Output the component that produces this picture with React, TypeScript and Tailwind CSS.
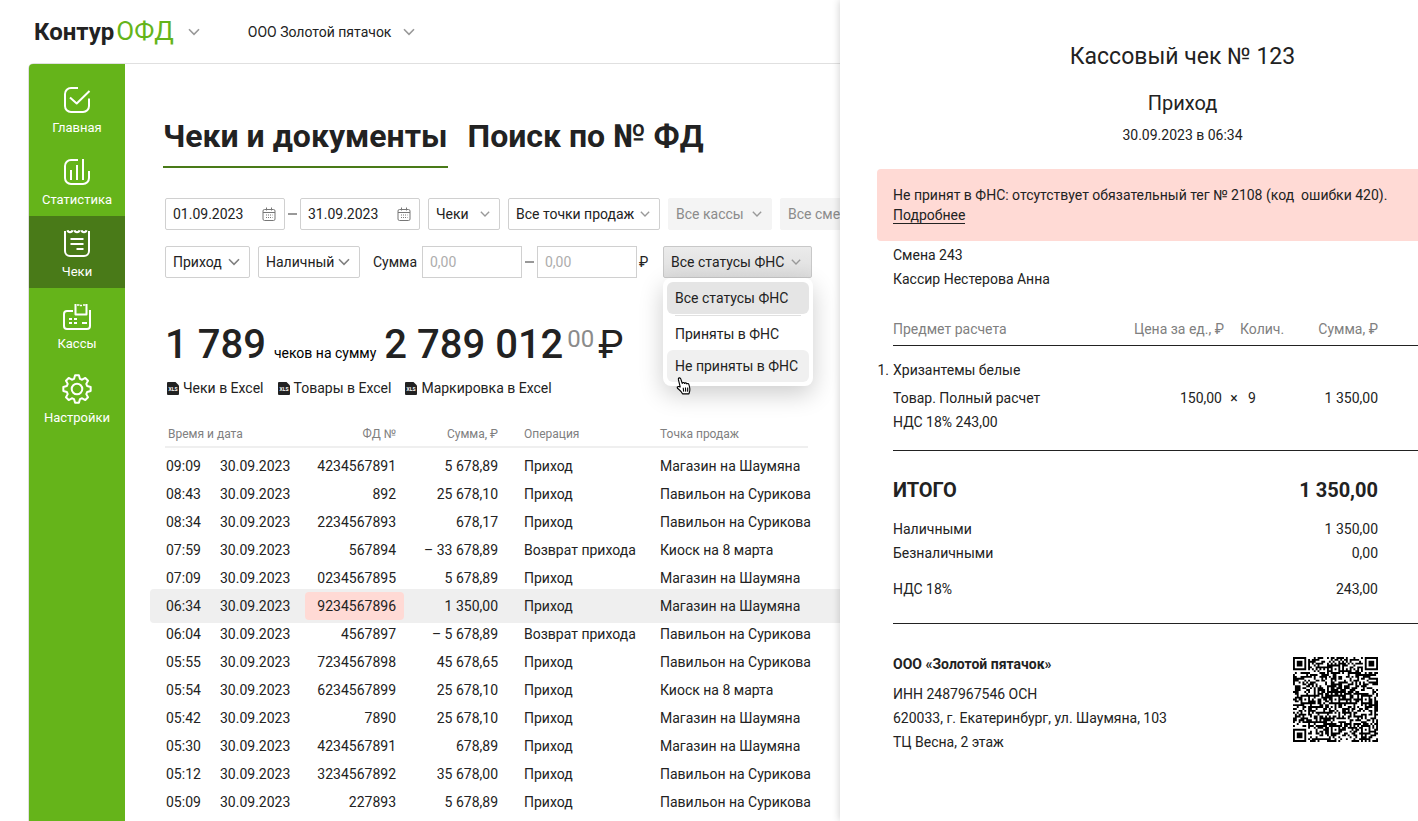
import { useState } from "react";
import type { ReactNode } from "react";
import clsx from "clsx";

function Chevron({ className }: { className?: string }) {
    return (
        <svg
            className={clsx("pointer-events-none h-2 shrink-0", className)}
            viewBox="0 0 12 8"
            fill="none"
            stroke="currentColor"
            strokeWidth="1.6"
        >
            <path d="M1 1.2 6 6.400l5-5.200" />
        </svg>
    );
}

function NavIcon({ size = 28, children }: { size?: number; children: ReactNode }) {
    return (
        <svg
            width={size}
            height={size}
            viewBox={`0 0 ${size} ${size}`}
            fill="none"
            stroke="white"
            strokeWidth="2"
            strokeLinejoin="round"
        >
            {children}
        </svg>
    );
}

const HomeIcon = () => (
    <NavIcon>
        <path d="M15 2H8a6 6 0 0 0-6 6v12a6 6 0 0 0 6 6h12a6 6 0 0 0 6-6v-7.500" />
        <path d="m7 11.500 6.700 6L26.500 5" />
    </NavIcon>
);

const StatsIcon = () => (
    <NavIcon>
        <path d="M15 2H8a6 6 0 0 0-6 6v12a6 6 0 0 0 6 6h12a6 6 0 0 0 6-6v-7" />
        <path d="M8 12v10M14 7v15M20 1v21" />
    </NavIcon>
);

const ReceiptIcon = () => (
    <NavIcon>
        <path d="M2 1v20a5 5 0 0 0 5 5h14a5 5 0 0 0 5-5V1" />
        <path d="M4.500 .3c.5 2.600 4.500 2.600 5 0M11.500 .3c.5 2.600 4.500 2.600 5 0M18.500 .3c.5 2.600 4.500 2.600 5 0" />
        <path d="M7.500 9h13M7.500 14h13M13.500 19h7" />
    </NavIcon>
);

const CashboxIcon = () => (
    <NavIcon>
        <path d="M10 9H4a3 3 0 0 0-3 3v12a3 3 0 0 0 3 3h20a3 3 0 0 0 3-3V8" />
        <path d="M12.500 2v10.500h11V2" />
        <path d="M14 3h2.500M17 3.500h2M20 3h2.500" strokeWidth="1.500" />
        <path d="M6 17h3M11 17h3M6 21h3M11 21h3M19 21h5" />
    </NavIcon>
);

function gearPath(c: number, outer: number, inner: number) {
    const points: string[] = [];
    for (let i = 0; i < 8; i++) {
        const mid = i * 45 - 90;
        [
            [-16, inner],
            [-8, outer],
            [8, outer],
            [16, inner],
        ].forEach(([delta, r]) => {
            const a = ((mid + delta) * Math.PI) / 180;
            points.push(`${(c + r * Math.cos(a)).toFixed(2)} ${(c + r * Math.sin(a)).toFixed(2)}`);
        });
    }
    return `M${points.join("L")}Z`;
}

const GearIcon = () => (
    <NavIcon size={30}>
        <path d={gearPath(15, 13.8, 10.6)} />
        <circle cx="15" cy="15" r="5.300" />
    </NavIcon>
);

const CalendarIcon = () => (
    <svg className="pointer-events-none shrink-0" width="14" height="14" viewBox="0 0 14 14" fill="none" stroke="#777">
        <rect x="1" y="2.500" width="12" height="11" rx="1.500" />
        <path d="M4.500 .5v3M9.500 .5v3M1 5.500h12" />
        <path d="M4 8h6.500M4 10.500h6.500" strokeDasharray="1 1" />
    </svg>
);

const XlsIcon = () => (
    <svg width="12" height="13" viewBox="0 0 12 13">
        <path d="M1 0h7.500L12 3.500V12a1 1 0 0 1-1 1H1a1 1 0 0 1-1-1V1a1 1 0 0 1 1-1Z" fill="#222" />
        <text x="6" y="9" textAnchor="middle" fontSize="5" fontWeight="700" fill="white">
            XLS
        </text>
    </svg>
);

const HandCursor = () => (
    <svg className="pointer-events-none absolute left-3 top-[98px]" width="18" height="19" viewBox="0 0 16 17">
        <path
            d="M4.600 9.800 3 3.300C2.600 1.500 4.600 1 5.100 2.600l1.300 4c.2-1 1.800-1 2.100.1.400-.8 1.800-.7 2 .4.500-.7 1.700-.5 1.900.6.800 2.400 1.500 4.800.3 7.300l-.3 1H6.700c-.6-2-2.300-3.200-4-4.600C1.100 10.200 2.500 9 3.700 9.500Z"
            fill="white"
            stroke="black"
            strokeLinejoin="round"
        />
        <path d="M7.300 10.500l.4 3.500M9.300 10.300l.2 3.700M11.300 10.200v3.800" stroke="black" />
    </svg>
);

const navItems = [
    { label: "Главная", icon: HomeIcon },
    { label: "Статистика", icon: StatsIcon },
    { label: "Чеки", icon: ReceiptIcon },
    { label: "Кассы", icon: CashboxIcon },
    { label: "Настройки", icon: GearIcon },
];

const rows = [
    ["09:09", "4234567891", "5 678,89", "Приход", "Магазин на Шаумяна"],
    ["08:43", "892", "25 678,10", "Приход", "Павильон на Сурикова"],
    ["08:34", "2234567893", "678,17", "Приход", "Павильон на Сурикова"],
    ["07:59", "567894", "– 33 678,89", "Возврат прихода", "Киоск на 8 марта"],
    ["07:09", "0234567895", "5 678,89", "Приход", "Магазин на Шаумяна"],
    ["06:34", "9234567896", "1 350,00", "Приход", "Магазин на Шаумяна"],
    ["06:04", "4567897", "– 5 678,89", "Возврат прихода", "Павильон на Сурикова"],
    ["05:55", "7234567898", "45 678,65", "Приход", "Павильон на Сурикова"],
    ["05:54", "6234567899", "25 678,10", "Приход", "Киоск на 8 марта"],
    ["05:42", "7890", "25 678,10", "Приход", "Магазин на Шаумяна"],
    ["05:30", "4234567891", "678,89", "Приход", "Магазин на Шаумяна"],
    ["05:12", "3234567892", "35 678,00", "Приход", "Павильон на Сурикова"],
    ["05:09", "227893", "5 678,89", "Приход", "Павильон на Сурикова"],
];

const statuses = ["Все статусы ФНС", "Приняты в ФНС", "Не приняты в ФНС"];

interface FilterSelectProps {
    label: string;
    value: string;
    className: string;
    chevron?: string;
    disabled?: boolean;
}

function FilterSelect({ label, value, className, chevron = "w-2.5 text-[#999]", disabled = false }: FilterSelectProps) {
    return (
        <div className={clsx("relative shrink-0", className)}>
            <select
                aria-label={label}
                disabled={disabled}
                className="h-8 w-full appearance-none rounded-xs border border-[#d0d0d0] bg-white pl-[7px] text-[#222] disabled:border-[#f4f4f4] disabled:bg-[#f4f4f4] disabled:text-[#8b8b8b] disabled:opacity-100"
            >
                <option>{value}</option>
            </select>
            <Chevron className={clsx("absolute right-2.5 top-3", chevron)} />
        </div>
    );
}

function DateInput({ label, value }: { label: string; value: string }) {
    return (
        <label className="flex h-8 w-30 shrink-0 items-center rounded-xs border border-[#d0d0d0] pl-[7px] pr-2">
            <input aria-label={label} defaultValue={value} className="w-full min-w-0 outline-none" />
            <CalendarIcon />
        </label>
    );
}

const Dash = () => <span className="mx-[3px] h-0.5 w-[9px] shrink-0 bg-[#999]" />;

function StatusFilter() {
    const [open, setOpen] = useState(true);
    const [selected, setSelected] = useState(statuses[0]);

    return (
        <div className="relative ml-4 w-[149px] shrink-0">
            <button
                type="button"
                aria-haspopup="listbox"
                aria-expanded={open}
                onClick={() => setOpen(!open)}
                className="flex h-8 w-full items-center justify-between rounded-xs border border-[#c8c8c8] bg-linear-to-b from-[#ebebeb] to-[#dedede] pl-[7px] pr-2.5 whitespace-nowrap"
            >
                {selected}
                <Chevron className="w-2.5 text-[#999]" />
            </button>
            {open && (
                <div className="absolute left-0 top-8 z-10 w-[150px] rounded-lg bg-white p-1 shadow-[0_8px_24px_rgba(0,0,0,0.2)]">
                    <ul role="listbox" aria-label="Статус ФНС">
                        {statuses.map((status, i) => (
                            <li
                                key={status}
                                role="option"
                                aria-selected={status === selected}
                                onClick={() => setSelected(status)}
                                className={clsx(
                                    "flex h-8 items-center rounded-md px-2 whitespace-nowrap",
                                    i === 2 && "bg-[#f0f0f0]",
                                    status === selected &&
                                        "relative mb-1 bg-[#e5e5e5] after:absolute after:inset-x-2 after:-bottom-0.5 after:h-px after:bg-[#e0e0e0]"
                                )}
                            >
                                {status}
                            </li>
                        ))}
                    </ul>
                    <HandCursor />
                </div>
            )}
        </div>
    );
}

function Sidebar() {
    return (
        <nav className="w-24 shrink-0 rounded-tl-sm bg-[#65b41a] pt-2">
            {navItems.map(({ label, icon: Icon }) => (
                <a
                    key={label}
                    href="#"
                    className={clsx(
                        "flex min-h-18 flex-col items-center gap-1 pt-3.5 text-[13px] leading-5 text-white",
                        label === "Чеки" && "bg-[#497a18]"
                    )}
                >
                    <Icon />
                    {label}
                </a>
            ))}
        </nav>
    );
}

function ReceiptsTable() {
    return (
        <table className="w-full table-fixed border-collapse whitespace-nowrap">
            <colgroup>
                <col className="w-[55px]" />
                <col className="w-[85px]" />
                <col className="w-[99px]" />
                <col className="w-[94px]" />
                <col className="w-[162px]" />
                <col />
            </colgroup>
            <thead>
                <tr className="h-[26px] border-b-2 border-[#efefef] text-xs text-[#808080] [&>th]:font-normal">
                    <th colSpan={2} className="pl-[3px] text-left">Время и дата</th>
                    <th className="pr-2 text-right">ФД №</th>
                    <th className="text-right">Сумма, ₽</th>
                    <th className="pl-[26px] text-left">Операция</th>
                    <th className="text-left">Точка продаж</th>
                </tr>
            </thead>
            <tbody className="before:block before:h-1">
                {rows.map(([time, number, sum, operation, place]) => {
                    const active = time === "06:34";
                    return (
                        <tr key={time} className={clsx("h-7", active && "relative")}>
                            <td
                                className={clsx(
                                    "pl-px",
                                    // the highlight is taller and wider than the row itself
                                    active &&
                                        "before:absolute before:-left-[15px] before:-right-8 before:-inset-y-[3px] before:-z-10 before:rounded-l-sm before:bg-[#efefef]"
                                )}
                            >
                                {time}
                            </td>
                            <td>30.09.2023</td>
                            <td className={clsx("pr-2 text-right", active && "rounded-sm bg-[#ffdad5]")}>{number}</td>
                            <td className="text-right">{sum}</td>
                            <td className="pl-[26px]">{operation}</td>
                            <td>{place}</td>
                        </tr>
                    );
                })}
            </tbody>
        </table>
    );
}

// 45x45 modules with finder, alignment and timing patterns
const QR_SIZE = 45;

function qrPath() {
    const finders = [[3, 3], [41, 3], [3, 41]];
    const aligns = [[22, 6], [6, 22], [22, 22], [38, 22], [22, 38], [38, 38]];
    let seed = 2487967;
    let d = "";
    for (let y = 0; y < QR_SIZE; y++) {
        for (let x = 0; x < QR_SIZE; x++) {
            seed = (seed * 1103515245 + 12345) % 2147483648;
            let dark = seed / 2147483648 > 0.46;
            if (x === 6 || y === 6) dark = (x + y) % 2 === 0;
            for (const [cx, cy] of aligns) {
                const r = Math.max(Math.abs(x - cx), Math.abs(y - cy));
                if (r <= 2) dark = r !== 1;
            }
            for (const [cx, cy] of finders) {
                const r = Math.max(Math.abs(x - cx), Math.abs(y - cy));
                if (r <= 4) dark = r < 2 || r === 3;
            }
            if (dark) d += `M${x} ${y}h1v1h-1z`;
        }
    }
    return d;
}

function QrCode() {
    return (
        <svg className="size-[85px]" viewBox={`0 0 ${QR_SIZE} ${QR_SIZE}`} role="img" aria-label="QR-код чека">
            <path d={qrPath()} fill="black" />
        </svg>
    );
}

function TotalLine({ label, value }: { label: string; value: string }) {
    return (
        <div className="flex justify-between leading-6">
            <dt>{label}</dt>
            <dd>{value}</dd>
        </div>
    );
}

function ReceiptPanel() {
    return (
        <aside className="z-20 w-[578px] shrink-0 bg-white pt-[41px] shadow-[0_0_8px_rgba(0,0,0,0.2)]">
            <header className="pl-[107px] text-center">
                <h2 className="text-[23px] leading-8">Кассовый чек № 123</h2>
                <p className="mt-3.5 text-xl leading-8">Приход</p>
                <p className="mt-1 leading-6">30.09.2023 в 06:34</p>
            </header>

            <div className="ml-[37px] mt-[22px] rounded-l-sm bg-[#ffdad5] p-4 leading-5">
                <p className="whitespace-pre">Не принят в ФНС: отсутствует обязательный тег № 2108 (код  ошибки 420).</p>
                <a href="#" className="border-b border-[#222]">Подробнее</a>
            </div>

            <div className="pl-[53px]">
                <p className="mt-0.5 leading-6">Смена 243</p>
                <p className="leading-6">Кассир Нестерова Анна</p>

                <table className="mt-[26px] w-full table-fixed border-collapse border-b border-[#222] leading-6">
                    <colgroup>
                        <col />
                        <col className="w-24" />
                        <col className="w-4" />
                        <col className="w-12" />
                        <col className="w-[130px]" />
                    </colgroup>
                    <thead>
                        <tr className="h-7 border-b border-[#222] align-top whitespace-nowrap text-[#808080] [&>th]:font-normal">
                            <th className="text-left">Предмет расчета</th>
                            <th className="text-right">Цена за ед., ₽</th>
                            <th />
                            <th className="text-left">Колич.</th>
                            <th className="pr-10 text-right">Сумма, ₽</th>
                        </tr>
                    </thead>
                    <tbody>
                        <tr className="h-[41px] align-bottom">
                            <td colSpan={5} className="relative pb-1">
                                <span className="absolute right-full mr-1">1.</span>
                                Хризантемы белые
                            </td>
                        </tr>
                        <tr>
                            <td>Товар. Полный расчет</td>
                            <td className="pr-0.5 text-right">150,00</td>
                            <td className="pl-1 text-center">×</td>
                            <td className="pl-2">9</td>
                            <td className="pr-10 text-right">1 350,00</td>
                        </tr>
                        <tr className="h-10 align-top">
                            <td colSpan={5}>НДС 18% 243,00</td>
                        </tr>
                    </tbody>
                </table>

                <dl className="border-b border-[#222] pb-[22px] pr-10 pt-[23px]">
                    <div className="mb-[11px] flex justify-between text-xl leading-8 font-bold">
                        <dt>ИТОГО</dt>
                        <dd>1 350,00</dd>
                    </div>
                    <TotalLine label="Наличными" value="1 350,00" />
                    <TotalLine label="Безналичными" value="0,00" />
                    <div className="mt-3">
                        <TotalLine label="НДС 18%" value="243,00" />
                    </div>
                </dl>

                <footer className="flex items-start justify-between pr-10 pt-7 leading-6">
                    <div>
                        <p className="mb-1.5 font-bold">ООО «Золотой пятачок»</p>
                        <p>ИНН 2487967546 ОСН</p>
                        <p>620033, г. Екатеринбург, ул. Шаумяна, 103</p>
                        <p>ТЦ Весна, 2 этаж</p>
                    </div>
                    <div className="pt-[5px]">
                        <QrCode />
                    </div>
                </footer>
            </div>
        </aside>
    );
}

export default function App() {
    return (
        <div className="flex min-h-screen overflow-hidden bg-white font-['Roboto','Liberation_Sans',sans-serif] text-sm text-[#222]">
            <div className="isolate flex min-w-0 flex-1 flex-col overflow-hidden">
                <header className="flex h-[63px] shrink-0 items-center pl-[34px]">
                    <a href="#" className="flex items-baseline gap-0.5 text-2xl">
                        <span className="font-bold">Контур</span>
                        <span className="text-[26px] leading-8 text-[#65b41a]">ОФД</span>
                    </a>
                    <Chevron className="ml-3.5 w-3 text-[#999]" />
                    <button type="button" className="ml-12 flex items-center gap-3">
                        ООО Золотой пятачок
                        <Chevron className="w-3 text-[#999]" />
                    </button>
                </header>

                <div className="ml-7 flex flex-1 rounded-tl-md border-l border-t border-[#e0e0e0]">
                    <Sidebar />
                    <main className="min-w-0 flex-1 pl-10">
                        <h1 className="-ml-0.5 flex gap-5 pt-12 text-[32px] leading-12 font-bold whitespace-nowrap">
                            <a href="#" className="border-b-2 border-[#497a18] pb-1.5">Чеки и документы</a>
                            <a href="#">Поиск по № ФД</a>
                        </h1>

                        <form className="mt-[30px] flex flex-col gap-4">
                            <div className="flex items-center">
                                <DateInput label="Дата начала" value="01.09.2023" />
                                <Dash />
                                <DateInput label="Дата окончания" value="31.09.2023" />
                                <div className="ml-2 flex gap-2">
                                    <FilterSelect label="Тип документа" value="Чеки" className="w-18" />
                                    <FilterSelect label="Точка продаж" value="Все точки продаж" className="w-38" />
                                    <FilterSelect label="Касса" value="Все кассы" className="w-26" disabled />
                                    <FilterSelect label="Смена" value="Все смены" className="w-28" disabled />
                                </div>
                            </div>
                            <div className="flex items-center">
                                <div className="flex gap-2">
                                    <FilterSelect label="Операция" value="Приход" className="w-[85px]" chevron="w-3 text-[#808080]" />
                                    <FilterSelect label="Оплата" value="Наличный" className="w-[102px]" chevron="w-3 text-[#808080]" />
                                </div>
                                <label htmlFor="sum-from" className="ml-[13px] w-[49px] shrink-0">Сумма</label>
                                <input id="sum-from" placeholder="0,00" className="h-8 w-25 shrink-0 border border-[#d0d0d0] px-[7px] placeholder:text-[#adadad]" />
                                <Dash />
                                <input aria-label="Сумма до" placeholder="0,00" className="h-8 w-25 shrink-0 border border-[#d0d0d0] px-[7px] placeholder:text-[#adadad]" />
                                <span className="ml-0.5 w-2">₽</span>
                                <StatusFilter />
                            </div>
                        </form>

                        <p className="mt-[43px] flex items-baseline whitespace-nowrap">
                            <span className="text-[40px] leading-12 font-medium">1 789</span>
                            <span className="mx-2 text-black">чеков на сумму</span>
                            <span className="text-[40px] leading-12 font-medium">2 789 012</span>
                            <span className="ml-1 self-start text-2xl leading-9 text-[#8b8b8b]">00</span>
                            <span className="ml-1 text-[38px] leading-12">₽</span>
                        </p>

                        <div className="mt-[9px] flex gap-3.5 pl-0.5 whitespace-nowrap">
                            {["Чеки в Excel", "Товары в Excel", "Маркировка в Excel"].map((label) => (
                                <a key={label} href="#" className="flex items-center gap-1 leading-5">
                                    <XlsIcon />
                                    {label}
                                </a>
                            ))}
                        </div>

                        <div className="mt-[23px] pr-8">
                            <ReceiptsTable />
                        </div>
                    </main>
                </div>
            </div>
            <ReceiptPanel />
        </div>
    );
}
